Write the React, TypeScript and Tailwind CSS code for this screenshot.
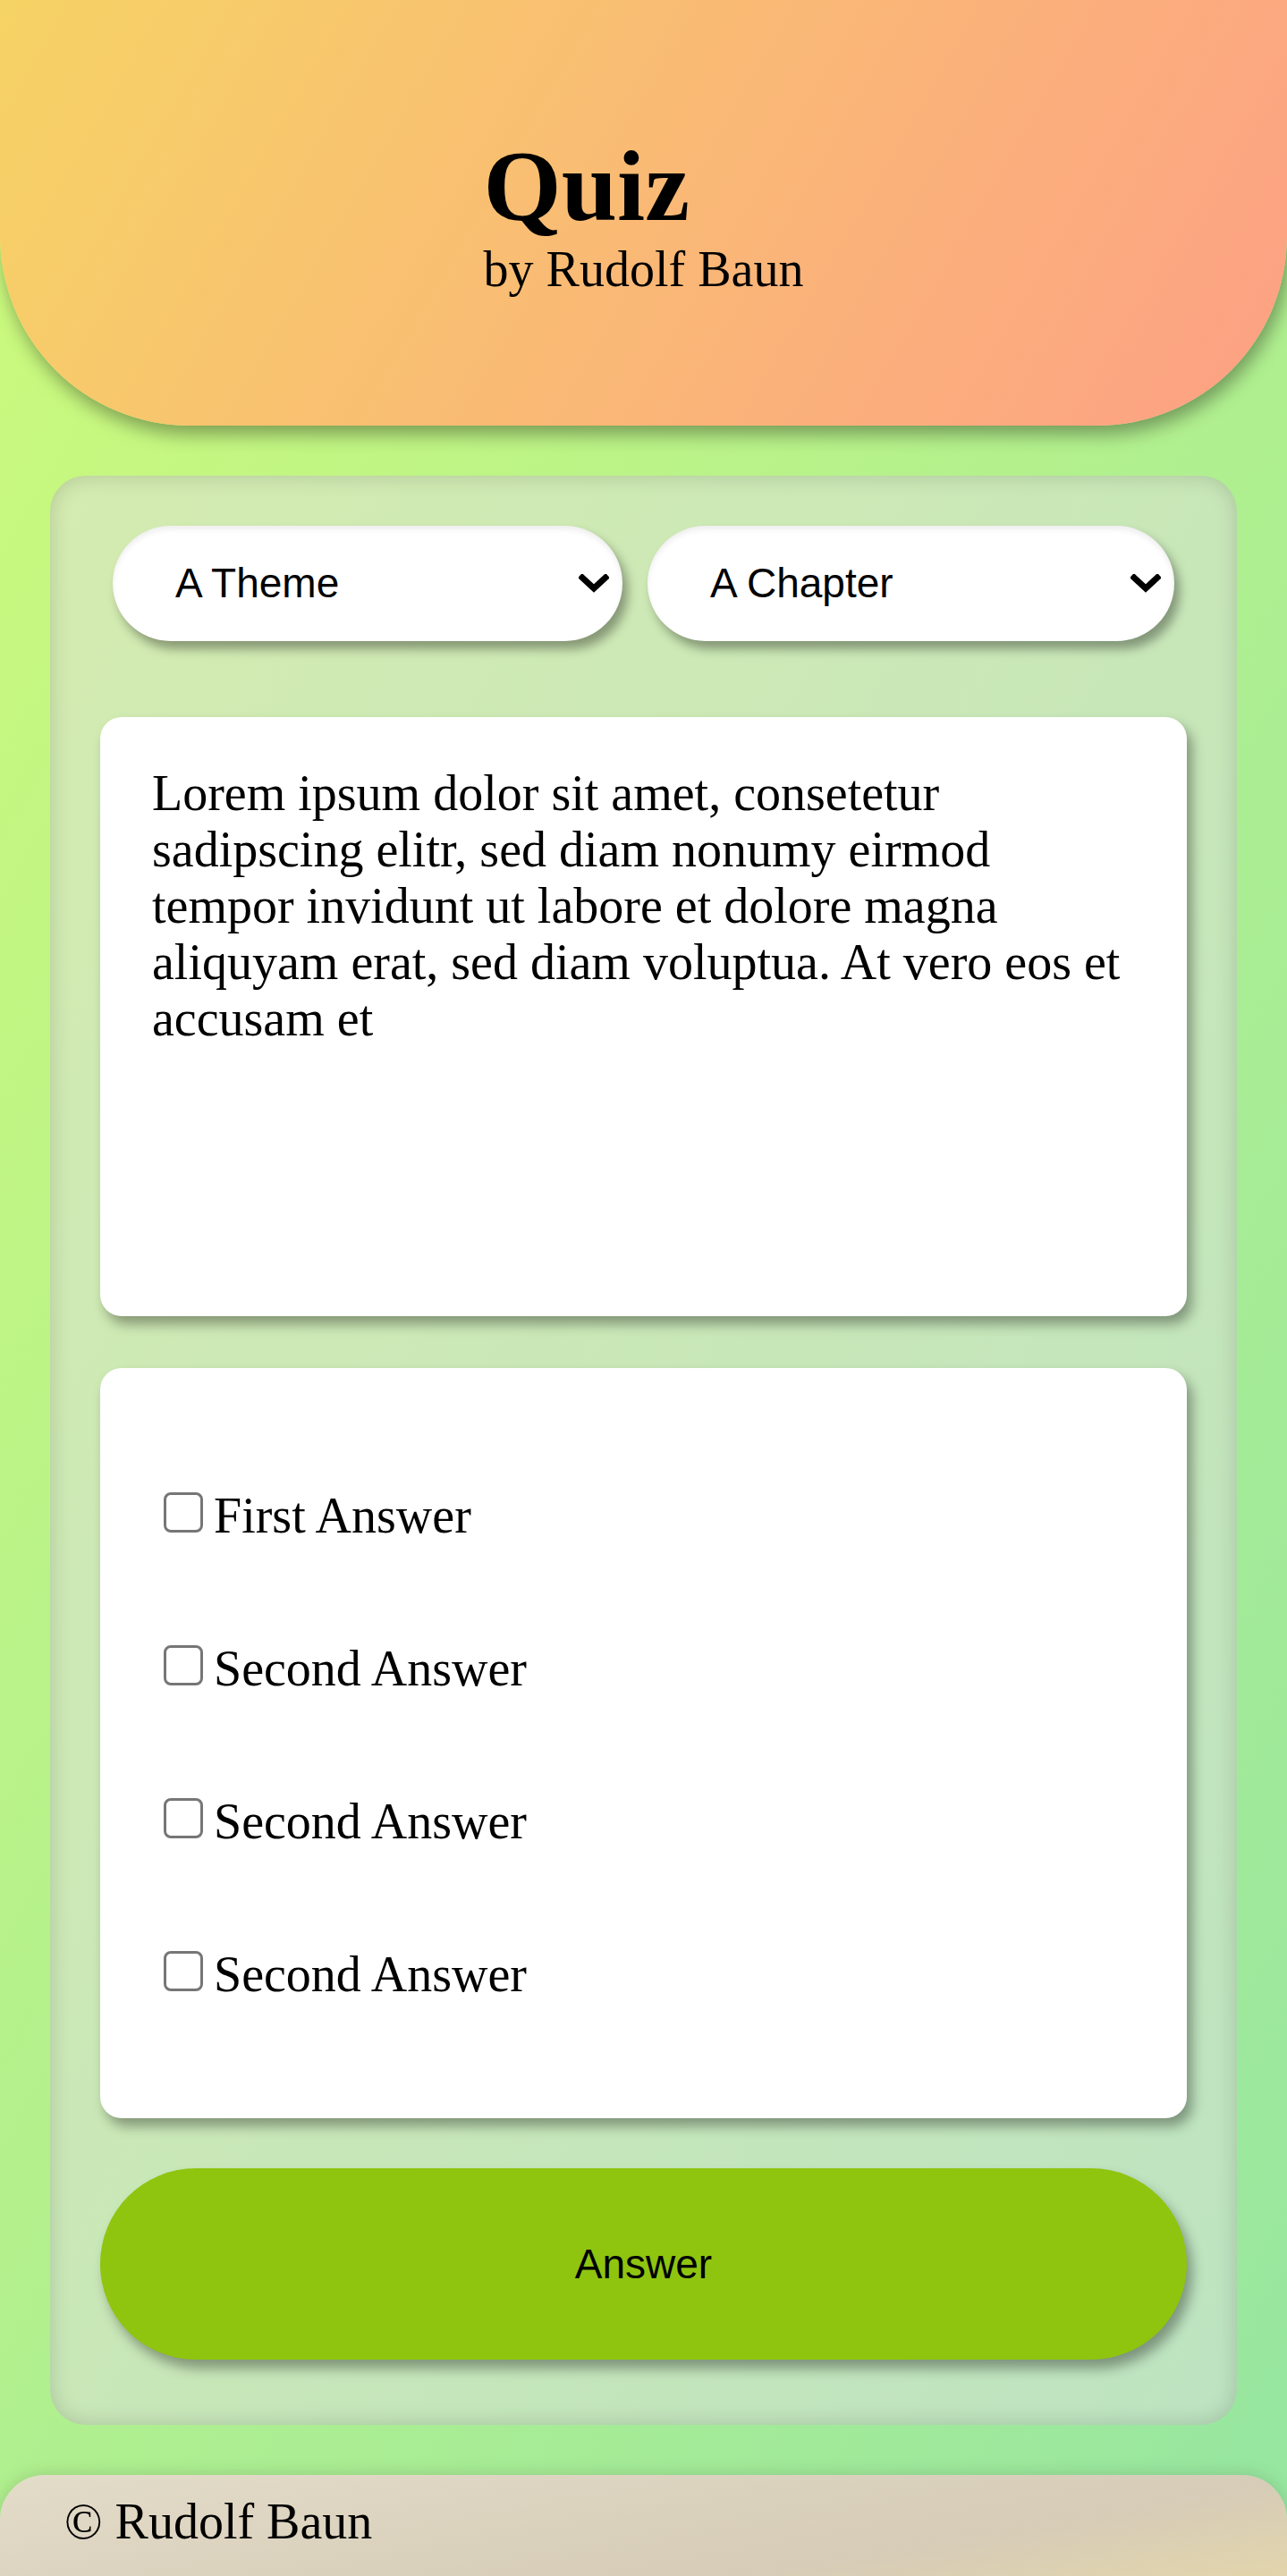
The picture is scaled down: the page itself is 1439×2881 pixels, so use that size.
import React from "react";

const serif = "font-['Liberation_Serif','Times_New_Roman',serif]";
const sans = "font-['Liberation_Sans',Arial,sans-serif]";

function Chevron() {
  return (
    <svg viewBox="0 0 34 22" className="pointer-events-none absolute right-[15px] top-1/2 h-[22px] w-[34px] -translate-y-1/2">
      <polyline points="4,4 17,16 30,4" fill="none" stroke="black" strokeWidth="7" strokeLinecap="square" />
    </svg>
  );
}

function Picker({ label, width }: { label: string; width: string }) {
  return (
    <div className={`relative ${width}`}>
      <select
        className={`h-[129px] w-full appearance-none rounded-full bg-white pl-[70px] pr-[60px] text-[46px] text-black outline-none ${sans} shadow-[6px_9px_12px_rgba(0,0,0,0.35),inset_0_4px_6px_rgba(0,0,0,0.07)]`}
        defaultValue={label}
      >
        <option>{label}</option>
      </select>
      <Chevron />
    </div>
  );
}

export default function App() {
  const answers = ["First Answer", "Second Answer", "Second Answer", "Second Answer"];

  return (
    <div className={`min-h-screen w-full bg-[linear-gradient(120deg,#cdfa7b_0%,#96e6a1_100%)] ${serif} text-black`}>
      {/* header */}
      <header className="h-[476px] rounded-b-[212px] bg-[linear-gradient(120deg,#f6d365_0%,#fda085_100%)] pt-[146px] shadow-[4px_10px_20px_rgba(0,0,0,0.35)]">
        <div className="mx-auto w-fit">
          <h1 className="text-[112px] font-bold leading-[124px]">Quiz</h1>
          <p className="text-[56px] leading-[63px]">by Rudolf Baun</p>
        </div>
      </header>

      {/* quiz panel */}
      <main className="mx-[56px] mt-[56px] rounded-[40px] bg-[rgba(226,224,226,0.5)] px-[56px] pb-[73px] pt-[56px] shadow-[inset_0_0_24px_rgba(0,0,0,0.16)]">
        <div className="mx-[14px] flex gap-[28px]">
          <Picker label="A Theme" width="w-[570px]" />
          <Picker label="A Chapter" width="w-[589px]" />
        </div>

        <section className="mt-[85px] h-[670px] rounded-[24px] bg-white px-[58px] pt-[54px] text-[56px] leading-[63px] shadow-[6px_9px_14px_rgba(0,0,0,0.35)]">
          Lorem ipsum dolor sit amet, consetetur sadipscing elitr, sed diam nonumy eirmod tempor invidunt ut labore et dolore magna aliquyam erat, sed diam voluptua. At vero eos et accusam et
        </section>

        <section className="mt-[58px] flex flex-col gap-[108px] rounded-[24px] bg-white pb-[129px] pl-[71px] pt-[134px] shadow-[6px_9px_14px_rgba(0,0,0,0.35)]">
          {answers.map((a, i) => (
            <label key={i} className="block text-[56px] leading-[63px]">
              <input
                type="checkbox"
                className="mr-[12px] inline-block h-[45px] w-[44px] appearance-none rounded-[8px] border-[3px] border-[#767676] bg-white align-baseline"
              />
              {a}
            </label>
          ))}
        </section>

        <button className={`mt-[56px] h-[214px] w-full rounded-full bg-[#8fc50f] text-[46px] text-black ${sans} shadow-[6px_10px_14px_rgba(0,0,0,0.35)]`}>
          Answer
        </button>
      </main>

      {/* footer */}
      <footer className="mt-[56px] h-[113px] rounded-t-[50px] bg-[linear-gradient(170deg,#e3dcc8_0%,#d6ccb8_70%,#e2d5ac_100%)] pl-[72px] pt-[21px] text-[56px] leading-[63px] shadow-[0_0_20px_rgba(0,0,0,0.15)]">
        © Rudolf Baun
      </footer>
    </div>
  );
}
